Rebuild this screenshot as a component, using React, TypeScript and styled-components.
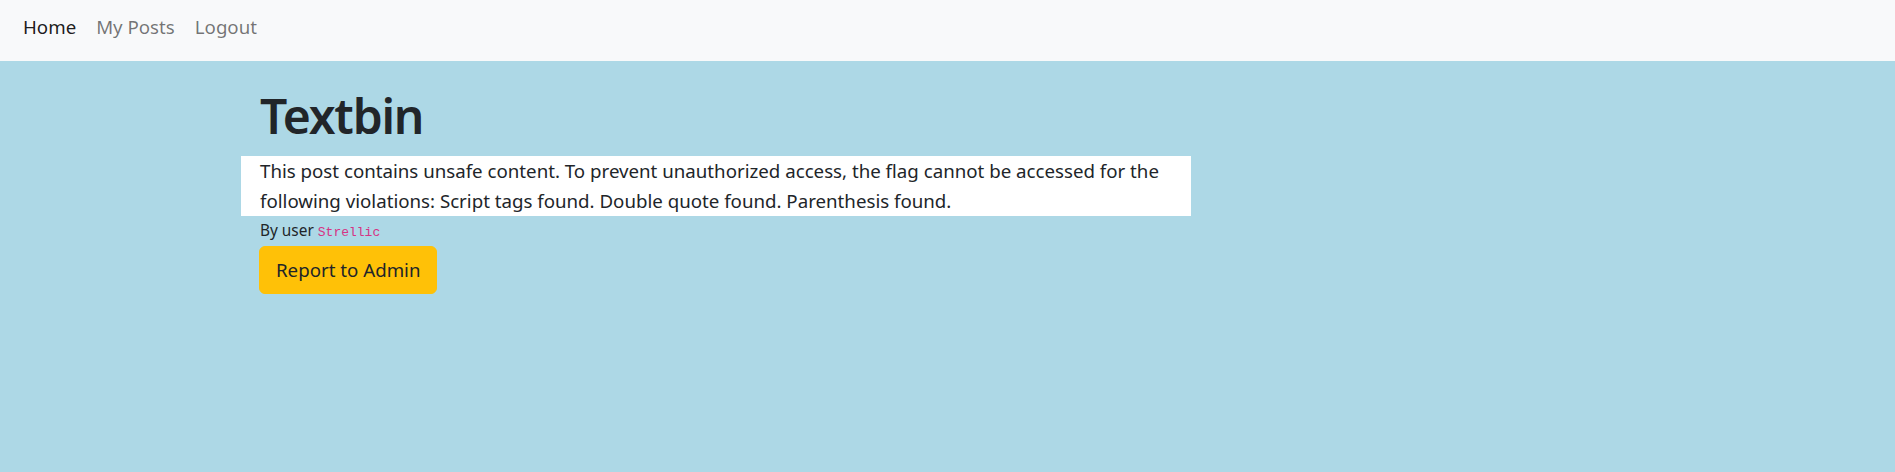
import React from 'react';
import styled, { createGlobalStyle } from 'styled-components';

const TEXT_COLOR = '#212529';

const GlobalStyle = createGlobalStyle`
  html, body {
    margin: 0;
    padding: 0;
    background-color: lightblue;
  }

  body {
    min-height: 472px;
    font-family: 'Noto Sans', 'Open Sans', sans-serif;
    font-size: 18.7px;
    line-height: 1.5;
    color: ${TEXT_COLOR};
  }

  * {
    box-sizing: border-box;
  }
`;

function App() {
  return (
    <>
      <GlobalStyle />
      <Navbar>
        <NavLink $active={true}>Home</NavLink>
        <NavLink>My Posts</NavLink>
        <NavLink>Logout</NavLink>
      </Navbar>
      <Main>
        <Title>Textbin</Title>
        <PostBody>
          This post contains unsafe content. To prevent unauthorized access, the flag cannot be
          accessed for the following violations: Script tags found. Double quote found. Parenthesis
          found.
        </PostBody>
        <Author>
          By user <Username>Strellic</Username>
        </Author>
        <ReportButton type="button">Report to Admin</ReportButton>
      </Main>
    </>
  );
}

export default App;

const Navbar = styled.nav`
  display: flex;
  align-items: center;
  height: 61px;
  padding: 0 13px 8px;
  background-color: #f8f9fa;
`;

const NavLink = styled.a<{ $active?: boolean }>`
  padding: 0 10px;
  font-size: 18.7px;
  line-height: 30px;
  color: ${(p) => (p.$active ? 'rgba(0, 0, 0, 0.9)' : 'rgba(0, 0, 0, 0.55)')};
  text-decoration: none;
  cursor: pointer;
`;

const Main = styled.main`
  display: flex;
  flex-direction: column;
  align-items: flex-start;
  padding: 25px 0 0 241px;
`;

const Title = styled.h1`
  margin: 0;
  padding-left: 19px;
  height: 70px;
  font-size: 48px;
  font-weight: 600;
  letter-spacing: -1.2px;
  line-height: 60px;
`;

const PostBody = styled.p`
  width: 950px;
  margin: 0;
  padding: 0 19px;
  font-size: 18.7px;
  line-height: 30px;
  background-color: white;
`;

const Author = styled.small`
  display: block;
  padding-left: 19px;
  height: 30px;
  font-size: 15.4px;
  line-height: 30px;
`;

const Username = styled.code`
  font-family: 'Liberation Mono', 'DejaVu Sans Mono', monospace;
  font-size: 13px;
  color: #d63384;
`;

const ReportButton = styled.button`
  margin-left: 18px;
  height: 48px;
  padding: 0 16px;
  border: 1px solid #ffc107;
  border-radius: 6px;
  background-color: #ffc107;
  font-family: inherit;
  font-size: 18.7px;
  line-height: 30px;
  white-space: nowrap;
  color: ${TEXT_COLOR};
  cursor: pointer;
`;
